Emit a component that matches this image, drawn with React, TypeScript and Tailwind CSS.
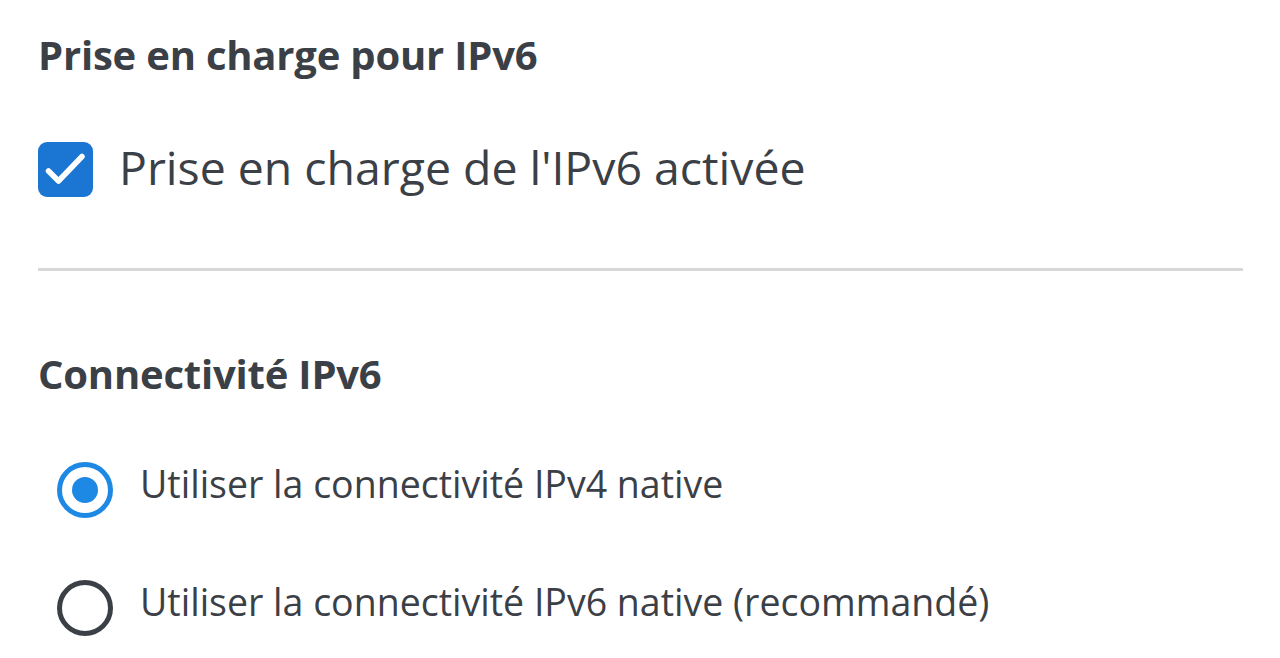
import React from "react";

const font = { fontFamily: "'Open Sans', 'Noto Sans', sans-serif" };

export default function App() {
  return (
    <div className="w-[1280px] h-[658px] bg-white overflow-hidden text-[#3b4047]" style={font}>
      <div className="pl-[38px] pr-[37px] pt-[32px]">
        <h1 className="text-[40px] font-bold leading-[46px] tracking-[-0.2px]">Prise en charge pour IPv6</h1>
        <div className="mt-[62px] flex items-center gap-[26px] h-[58px]">
          <div className="w-[55px] h-[55px] rounded-[9px] bg-[#1b76d3] shrink-0">
            <svg width="55" height="55" viewBox="0 0 55 55" fill="none" stroke="white" strokeWidth="5.5" strokeLinecap="round" strokeLinejoin="round">
              <path d="M10.5 29 L20.5 39 L44 14.5" />
            </svg>
          </div>
          <span className="text-[46.4px] leading-[58px] pb-[4px]">Prise en charge de l'IPv6 activée</span>
        </div>
        <div className="mt-[70px] h-[3px] bg-[#d8d8d8]" />
        <h2 className="mt-[78px] text-[40px] font-bold leading-[50px] tracking-[-0.2px]">Connectivité IPv6</h2>
        <div className="mt-[63px] flex flex-col gap-[62px] pl-[19px]">
          <div className="flex items-center gap-[27px] h-[56px]">
            <div className="w-[56px] h-[56px] rounded-full border-[5px] border-[#1e88e5] flex items-center justify-center shrink-0">
              <div className="w-[26px] h-[26px] rounded-full bg-[#1e88e5]" />
            </div>
            <span className="text-[37.5px] leading-[56px] pb-[12px]">Utiliser la connectivité IPv4 native</span>
          </div>
          <div className="flex items-center gap-[27px] h-[56px]">
            <div className="w-[56px] h-[56px] rounded-full border-[5px] border-[#3b4047] shrink-0" />
            <span className="text-[37.5px] leading-[56px] pb-[12px]">Utiliser la connectivité IPv6 native (recommandé)</span>
          </div>
        </div>
      </div>
    </div>
  );
}
